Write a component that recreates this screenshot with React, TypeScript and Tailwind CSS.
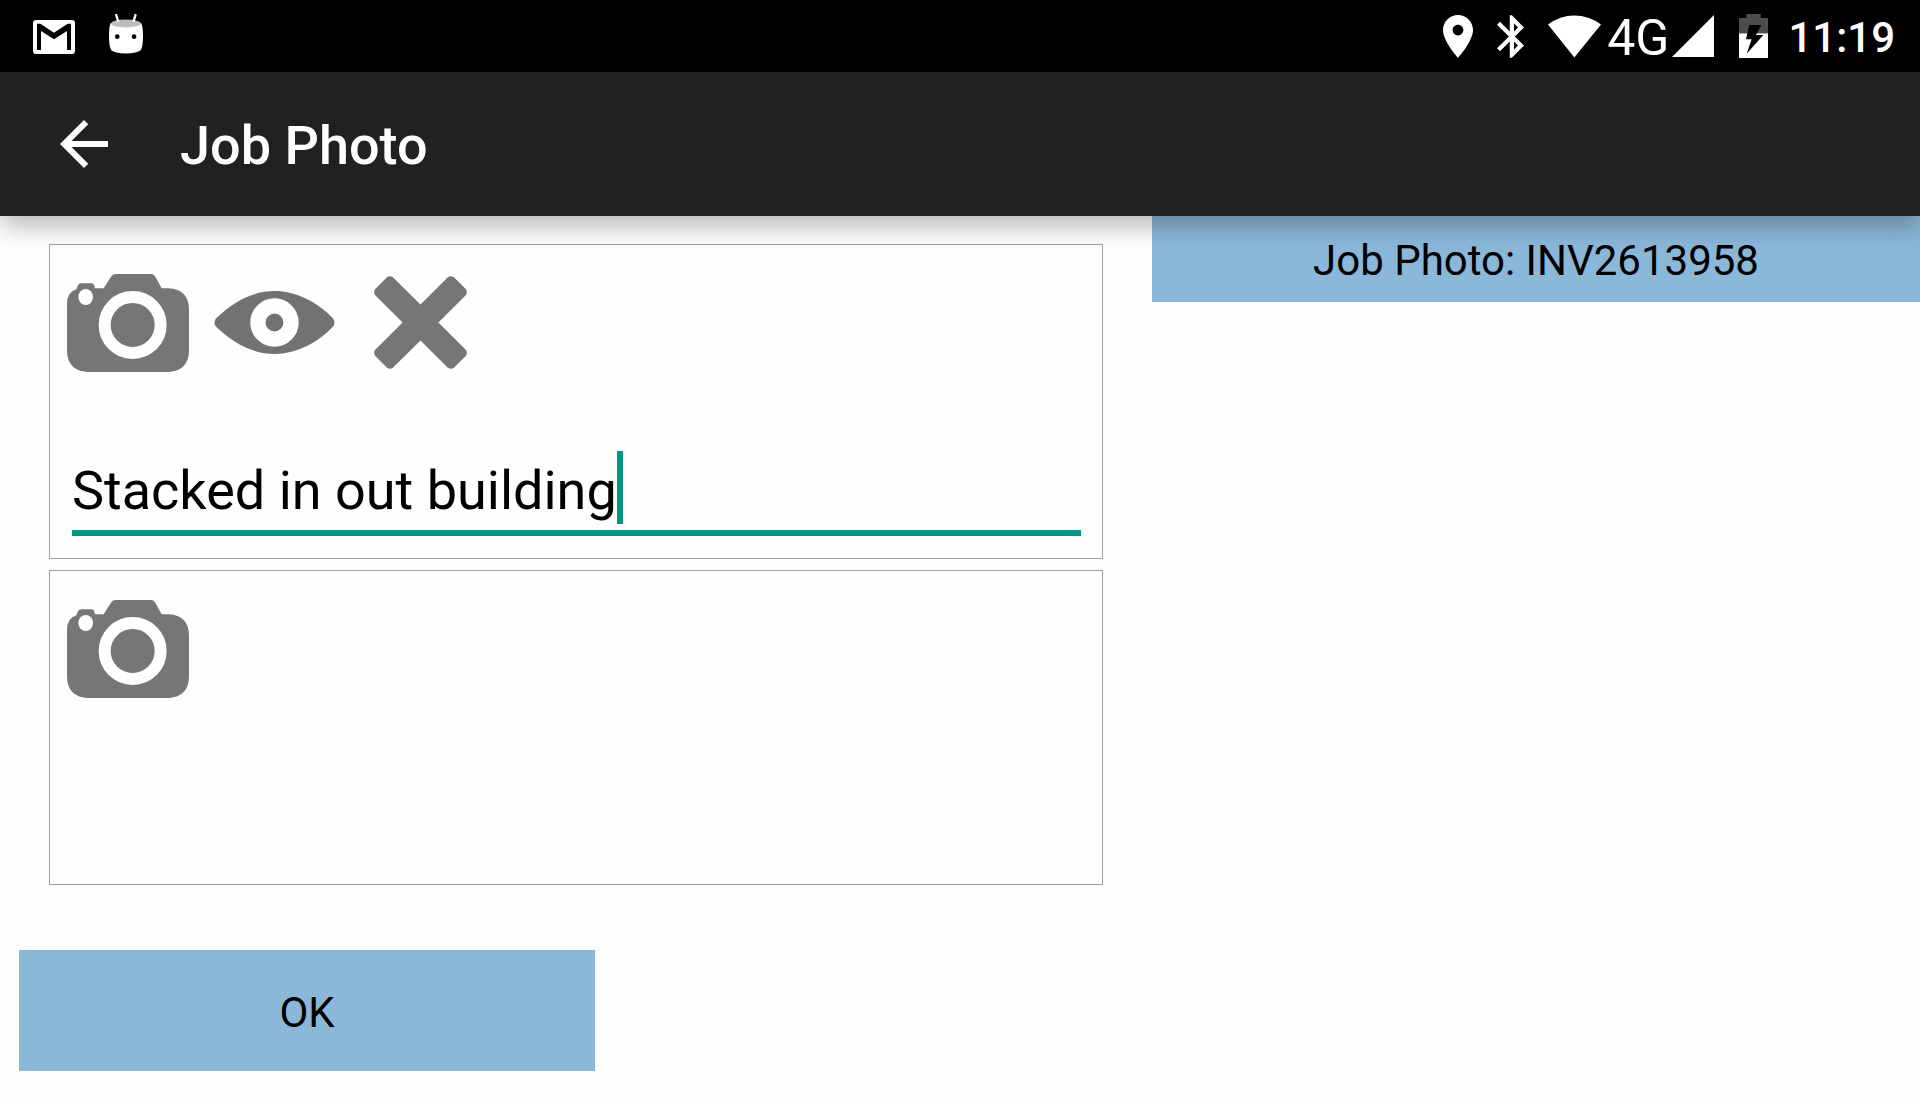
import { useState } from "react";

function GmailIcon() {
  return (
    <svg className="w-[42px] h-[34px]" viewBox="0 0 126 102">
      <rect width="126" height="102" rx="10" fill="#fff" />
      <path d="M12 11H22L63 38L104 11H114V90H102V33L63 58L24 33V90H12Z" fill="#000" />
    </svg>
  );
}

function RobotIcon() {
  return (
    <svg className="w-[34px] h-[41px]" viewBox="0 0 103 121">
      <path
        d="M5 29Q51 44 97 29Q103 38 103 70Q103 100 96 111Q85 120 51 121Q17 120 7 111Q0 100 0 70Q0 38 5 29Z"
        fill="#fff"
      />
      <ellipse cx="51" cy="30" rx="45" ry="12" fill="#bdbdbd" />
      <path d="M21 2L28 25M81 2L74 25" stroke="#fff" strokeWidth="7" />
      <circle cx="25" cy="70" r="7" />
      <circle cx="76" cy="70" r="7" />
    </svg>
  );
}

function PlaceIcon() {
  return (
    <svg className="w-[30px] h-[43px]" viewBox="5 2 14 20" fill="#fff">
      <path d="M12 2C8.13 2 5 5.13 5 9c0 5.25 7 13 7 13s7-7.75 7-13c0-3.87-3.13-7-7-7zm0 9.5c-1.38 0-2.5-1.12-2.5-2.5s1.12-2.5 2.5-2.5 2.5 1.12 2.5 2.5-1.12 2.5-2.5 2.5z" />
    </svg>
  );
}

function BluetoothIcon() {
  return (
    <svg className="w-[27px] h-[43px]" viewBox="5 2 12.71 20" fill="#fff">
      <path d="M17.71 7.71L12 2h-1v7.59L6.41 5 5 6.41 10.59 12 5 17.59 6.41 19 11 14.41V22h1l5.71-5.71-4.3-4.29 4.3-4.29zM13 5.83l1.88 1.88L13 9.59V5.83zm1.88 10.46L13 18.17v-3.76l1.88 1.88z" />
    </svg>
  );
}

function WifiIcon() {
  return (
    <svg className="w-[53px] h-[43px]" viewBox="0 0 159 128" fill="#fff">
      <path d="M0 28Q36 1 79 1Q122 1 159 28L79 127Z" />
    </svg>
  );
}

function SignalIcon() {
  return (
    <svg className="w-[42px] h-[42px]" viewBox="0 0 42 42" fill="#fff">
      <path d="M42 0V42H0Z" />
    </svg>
  );
}

function BatteryIcon() {
  return (
    <svg className="w-[29px] h-[44px]" viewBox="0 0 87 132">
      <path d="M22 0H65V12H87V58H0V12H22Z" fill="#4d4d4d" />
      <path d="M0 58H87V132H0Z" fill="#fff" />
      <path d="M31 33H67L51 63H73L23 119L38 76H21Z" fill="#000" />
    </svg>
  );
}

function CameraIcon() {
  return (
    <svg className="w-[122px] h-[98px]" viewBox="0 0 366 294">
      <path
        d="M28 46L33 34Q36 28 43 28H74Q80 28 82 35L84 43H110L133 7Q138 0 146 0H252Q260 0 264 7L284 43H304Q366 46 366 108V232Q364 290 306 294H60Q2 290 0 232V90Q0 54 28 46Z"
        fill="#767676"
      />
      <ellipse cx="56" cy="69" rx="22" ry="24" fill="#fefefe" />
      <circle cx="197" cy="153" r="84" fill="none" stroke="#fefefe" strokeWidth="36" />
    </svg>
  );
}

function EyeIcon() {
  return (
    <svg className="w-[121px] h-[63px]" viewBox="0 0 364 190">
      <path
        d="M6 82C60 30 120 0 182 0C245 0 310 32 358 82Q368 95 358 108C310 158 245 190 182 190C120 190 60 160 6 108Q-4 95 6 82Z"
        fill="#727272"
      />
      <circle cx="182" cy="95" r="50" fill="none" stroke="#fefefe" strokeWidth="46" />
    </svg>
  );
}

function CrossIcon() {
  return (
    <svg className="w-[93px] h-[93px]" viewBox="0 0 280 280">
      <path
        d="M40 3Q48 -2 56 3L140 86L223 3Q231 -2 240 3L277 40Q282 48 277 57L194 140L277 223Q282 231 277 240L240 277Q231 282 223 277L140 194L56 277Q48 282 40 277L3 240Q-2 231 3 223L86 140L3 57Q-2 48 3 40Z"
        fill="#767676"
      />
    </svg>
  );
}

const iconButton = "flex w-[146px] h-[155px] items-center justify-center";

function StatusBar() {
  return (
    <div className="flex h-[72px] items-center justify-between bg-black pl-[33px] pr-[25px] text-white">
      <div className="flex items-end gap-[34px] pb-[6px]">
        <GmailIcon />
        <RobotIcon />
      </div>
      <div className="flex items-center">
        <div className="flex items-center gap-6">
          <PlaceIcon />
          <BluetoothIcon />
          <WifiIcon />
        </div>
        <span className="ml-[6px] mr-[3px] pt-1 text-[50px] leading-[60px]">4G</span>
        <div className="flex items-center gap-[25px]">
          <SignalIcon />
          <BatteryIcon />
        </div>
        <span className="ml-5 pt-1 text-[42px] leading-[48px] font-medium">11:19</span>
      </div>
    </div>
  );
}

function AppBar() {
  return (
    <header className="relative z-10 flex h-[144px] items-center gap-[60px] bg-[#212121] px-12 text-white shadow-[0_10px_24px_rgba(0,0,0,0.28)]">
      <button type="button" aria-label="Back">
        <svg className="size-[72px]" viewBox="0 0 24 24" fill="#fff">
          <path d="M20 11H7.83l5.59-5.59L12 4l-8 8 8 8 1.41-1.41L7.83 13H20v-2z" />
        </svg>
      </button>
      <h1 className="pt-1 text-[54px] leading-[64px] font-medium">Job Photo</h1>
    </header>
  );
}

function NoteField() {
  const [note, setNote] = useState("Stacked in out building");

  return (
    <div className="ml-[22px] mr-[21px] mt-[51px] flex items-end border-b-6 border-[#069583] pb-[6px]">
      <input
        aria-label="Photo note"
        className="field-sizing-content h-[66px] bg-transparent text-[54px] leading-[66px] text-black outline-none"
        value={note}
        onChange={(e) => setNote(e.target.value)}
      />
      <div className="h-[73px] w-[6px] bg-[#069583]" />
    </div>
  );
}

function PhotoCard({ taken = false }: { taken?: boolean }) {
  return (
    <div className="min-h-[315px] border border-[#a0a0a0]">
      <div className="flex pl-[5px]">
        <button type="button" aria-label="Take photo" className={iconButton}>
          <CameraIcon />
        </button>
        {taken && (
          <>
            <button type="button" aria-label="View photo" className={iconButton}>
              <EyeIcon />
            </button>
            <button type="button" aria-label="Remove photo" className={iconButton}>
              <CrossIcon />
            </button>
          </>
        )}
      </div>
      {taken && <NoteField />}
    </div>
  );
}

export default function App() {
  return (
    <div className="min-h-screen bg-[#fefefe] font-['Roboto',sans-serif] text-black">
      <StatusBar />
      <AppBar />
      <main>
        <div className="flex items-start">
          <section className="flex w-3/5 flex-col gap-[11px] px-[49px] pt-7">
            <PhotoCard taken />
            <PhotoCard />
          </section>
          <h2 className="flex h-[86px] w-2/5 items-center justify-center bg-[#8bb7d9] pt-1 text-[42px] leading-[48px]">
            Job Photo: INV2613958
          </h2>
        </div>
        <button
          type="button"
          className="mt-[65px] ml-[19px] h-[121px] w-[30%] bg-[#8bb7d9] pt-1 text-[42px] leading-[48px]"
        >
          OK
        </button>
      </main>
    </div>
  );
}
